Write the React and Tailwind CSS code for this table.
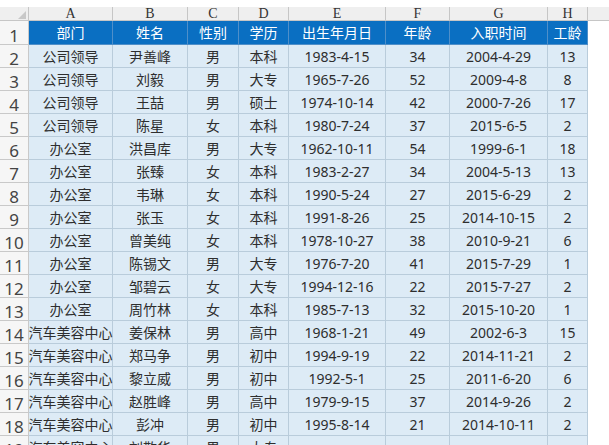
const cols = ['A', 'B', 'C', 'D', 'E', 'F', 'G', 'H'];
const head = ['部门', '姓名', '性别', '学历', '出生年月日', '年龄', '入职时间', '工龄'];

const rows = [
  ['公司领导', '尹善峰', '男', '本科', '1983-4-15', '34', '2004-4-29', '13'],
  ['公司领导', '刘毅', '男', '大专', '1965-7-26', '52', '2009-4-8', '8'],
  ['公司领导', '王喆', '男', '硕士', '1974-10-14', '42', '2000-7-26', '17'],
  ['公司领导', '陈星', '女', '本科', '1980-7-24', '37', '2015-6-5', '2'],
  ['办公室', '洪昌库', '男', '大专', '1962-10-11', '54', '1999-6-1', '18'],
  ['办公室', '张臻', '女', '本科', '1983-2-27', '34', '2004-5-13', '13'],
  ['办公室', '韦琳', '女', '本科', '1990-5-24', '27', '2015-6-29', '2'],
  ['办公室', '张玉', '女', '本科', '1991-8-26', '25', '2014-10-15', '2'],
  ['办公室', '曾美纯', '女', '本科', '1978-10-27', '38', '2010-9-21', '6'],
  ['办公室', '陈锡文', '男', '大专', '1976-7-20', '41', '2015-7-29', '1'],
  ['办公室', '邹碧云', '女', '大专', '1994-12-16', '22', '2015-7-27', '2'],
  ['办公室', '周竹林', '女', '本科', '1985-7-13', '32', '2015-10-20', '1'],
  ['汽车美容中心', '姜保林', '男', '高中', '1968-1-21', '49', '2002-6-3', '15'],
  ['汽车美容中心', '郑马争', '男', '初中', '1994-9-19', '22', '2014-11-21', '2'],
  ['汽车美容中心', '黎立威', '男', '初中', '1992-5-1', '25', '2011-6-20', '6'],
  ['汽车美容中心', '赵胜峰', '男', '高中', '1979-9-15', '37', '2014-9-26', '2'],
  ['汽车美容中心', '彭冲', '男', '初中', '1995-8-14', '21', '2014-10-11', '2'],
  ['汽车美容中心', '刘敬华', '男', '大专', '', '', '', ''],
];

const grid = 'grid grid-cols-[29px_84px_75px_51px_50px_97px_64px_98px_40px_1fr]';

function RowLabel({ n, h = 'h-[23px]' }) {
  return (
    <div className={`flex items-end justify-center border-r border-b border-[#c9c9c9] bg-[#f6f6f6] text-[17px] leading-[17px] text-[#444] ${h}`}>
      {n}
    </div>
  );
}

export default function App() {
  return (
    <div className="h-[445px] w-[609px] overflow-hidden bg-white pt-[7px] font-['Noto_Sans','Noto_Sans_CJK_SC',sans-serif]">
      {/* column letters */}
      <div className={`${grid} h-[14px] bg-[#efefef]`}>
        <div className="relative border-r border-b border-[#c6c6c6]">
          <svg className="absolute right-[2px] bottom-[1px]" width="8" height="8" viewBox="0 0 8 8">
            <polygon points="8,0 8,8 0,8" fill="#c8c8c8" />
          </svg>
        </div>
        {cols.map((c) => (
          <div
            key={c}
            className="flex items-center justify-center border-r border-b border-[#c6c6c6] font-['Liberation_Serif',serif] text-[14px] leading-[13px] text-[#333]"
          >
            {c}
          </div>
        ))}
        <div className="border-b border-[#c6c6c6]" />
      </div>

      {/* header row */}
      <div className={grid}>
        <RowLabel n={1} h="h-[24px]" />
        {head.map((h) => (
          <div
            key={h}
            className="flex h-[24px] items-center justify-center border-r border-b border-[#4f8fc9] bg-[#0a6fc2] text-[14px] text-white"
          >
            {h}
          </div>
        ))}
        <div />
      </div>

      {rows.map((r, i) => (
        <div key={i} className={grid}>
          <RowLabel n={i + 2} />
          {r.map((v, j) => (
            <div
              key={j}
              className="flex h-[23px] items-center justify-center whitespace-nowrap border-r border-b border-[#b9ccdb] bg-[#ddebf6] text-[14px] text-[#2e2e2e]"
            >
              {v}
            </div>
          ))}
          <div />
        </div>
      ))}
    </div>
  );
}
